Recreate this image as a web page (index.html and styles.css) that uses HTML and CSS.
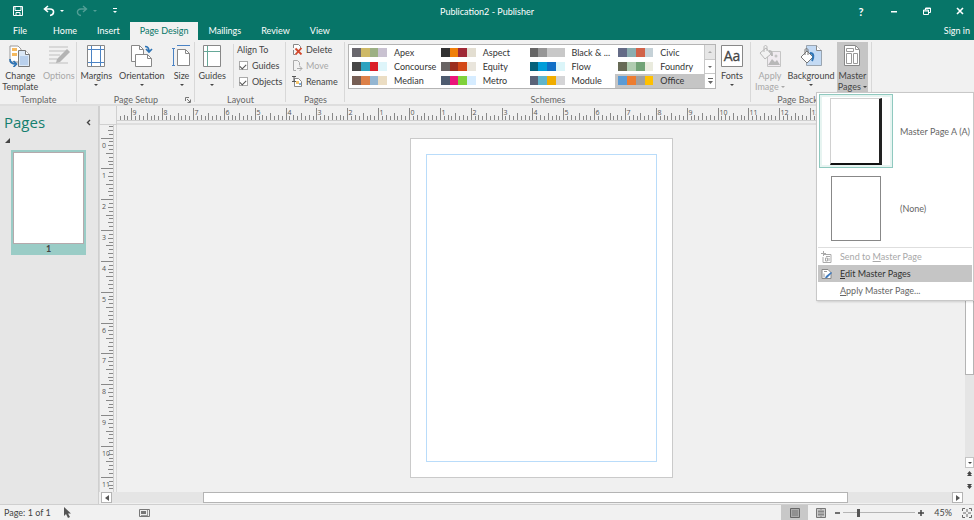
FILE: index.html
```html
<!DOCTYPE html>
<html lang="en">
<head>
    <meta charset="UTF-8">
    <meta name="viewport" content="width=device-width, initial-scale=1.0">
    <title>Publication2 - Publisher</title>
    <link rel="stylesheet" href="styles.css">
</head>
<body>
    <header class="top">
        <div class="titlebar">
            <div class="quick">
                <button aria-label="Save"><svg width="12" height="12" viewBox="0 0 12 12"><path d="M1.500 1.500h9v9h-9zM3 1.500v4h6v-4M4 10.500v-3h4v3" fill="none" stroke="#fff"/></svg></button>
                <button class="undo" aria-label="Undo"><svg width="12" height="12" viewBox="0 0 12 12"><path d="M5 1L1.500 4 5 7M2 4h5c5 0 4.500 6 0 6.500" fill="none" stroke="#fff" stroke-width="1.600"/></svg><i class="caret"></i></button>
                <button class="redo" aria-label="Redo" disabled><svg width="12" height="12" viewBox="0 0 12 12"><path d="M7 1l3.500 3L7 7M10 4H5C0 4 .5 10 5 10.500" fill="none" stroke="#fff" stroke-width="1.400"/></svg><i class="caret"></i></button>
                <button aria-label="Customize toolbar"><svg width="6" height="6" viewBox="0 0 6 6"><path d="M1 0h4v1H1zM1 3h4L3 5z" fill="#fff"/></svg></button>
            </div>
            <h1>Publication2 - Publisher</h1>
            <div class="window-buttons">
                <button aria-label="Help">?</button>
                <button aria-label="Minimize"><svg width="8" height="8" viewBox="0 0 8 8"><path d="M1 4h6v1.500H1z" fill="#fff"/></svg></button>
                <button aria-label="Restore"><svg width="8" height="8" viewBox="0 0 8 8"><path d="M.5 3h5v4.500h-5zM.5 4h5M2.500 3V1h5v4.500h-2M2.500 1.500h5" fill="none" stroke="#fff"/></svg></button>
                <button aria-label="Close"><svg width="8" height="8" viewBox="0 0 8 8"><path d="M1 1l6 6M7 1L1 7" stroke="#fff" stroke-width="1.600"/></svg></button>
            </div>
        </div>
        <nav class="tabs">
            <a href="#file" class="file">File</a>
            <a href="#home">Home</a>
            <a href="#insert">Insert</a>
            <a href="#design" class="active">Page Design</a>
            <a href="#mailings">Mailings</a>
            <a href="#review">Review</a>
            <a href="#view">View</a>
            <a href="#signin" class="signin">Sign in</a>
        </nav>
    </header>

    <section class="ribbon">
        <div class="group template">
            <div class="tools">
                <button class="big">
                    <svg width="22" height="22" viewBox="0 0 22 22"><path d="M1 1h8l3 3v13H1z" fill="#fff" stroke="#999"/><path d="M3 3h5v3H3zM3 8h5v3H3z" fill="#f5b95f"/><path d="M9.500 5.500h7l4 4v12h-11z" fill="#dbe8f6" stroke="#777"/><path d="M16.500 5.500v4h4" fill="#fff" stroke="#777"/><path d="M11 11h8v9h-8z" fill="#b9d0ec"/><path d="M1 14c0 4 2 5 6 5M4.500 16L7.500 19l-3 3" fill="none" stroke="#2e74b5" stroke-width="1.700"/></svg>
                    <span>Change<br>Template</span>
                </button>
                <button class="big" disabled>
                    <svg width="22" height="22" viewBox="0 0 22 22"><path d="M1 2h19M1 6h17M1 10h11M1 14h8M1 18h19" stroke="#d2d2d2" stroke-width="2"/><path d="M8 18l1-4L19 4l3 3-10 10z" fill="#a5a5a5"/></svg>
                    <span>Options</span>
                </button>
            </div>
            <h2>Template</h2>
        </div>
        <div class="group setup">
            <div class="tools">
                <button class="big">
                    <svg width="18" height="22" viewBox="0 0 18 22"><path d="M.5.500h17v21H.5z" fill="#fff" stroke="#888"/><path d="M4.500 1v20M13.500 1v20M1 4.500h16M1 17.500h16" stroke="#4b83c4"/></svg>
                    <span>Margins</span><i class="caret"></i>
                </button>
                <button class="big">
                    <svg width="23" height="22" viewBox="0 0 23 22"><path d="M1.500.500h8l4 4v12h-12z" fill="#fff" stroke="#888"/><path d="M9.500.500v4h4" fill="none" stroke="#888"/><path d="M5.500 9.500h12l4 4v8h-16z" fill="#fff" stroke="#888"/><path d="M17.500 9.500v4h4" fill="none" stroke="#888"/><path d="M15 1.500c3 0 4 2 4 5M16 4l3 3 3-3" fill="none" stroke="#2e74b5" stroke-width="1.700"/></svg>
                    <span>Orientation</span><i class="caret"></i>
                </button>
                <button class="big">
                    <svg width="20" height="22" viewBox="0 0 20 22"><path d="M5 .5h13M1.500 4v16M0 3.500h3M0 20.500h3" stroke="#4b83c4" fill="none"/><path d="M5.500 4.500h8l4 4v12h-12z" fill="#fff" stroke="#888"/><path d="M13.500 4.500v4h4" fill="none" stroke="#888"/></svg>
                    <span>Size</span><i class="caret"></i>
                </button>
            </div>
            <h2>Page Setup</h2>
            <button class="launcher" aria-label="Page Setup options"><svg width="6" height="6" viewBox="0 0 6 6"><path d="M.5 4V.5H4M2 2l3 3M5.500 2.500v3h-3" fill="none" stroke="#777"/></svg></button>
        </div>
        <div class="group layout">
            <div class="tools">
                <button class="big">
                    <svg width="18" height="22" viewBox="0 0 18 22"><path d="M.5.500h17v21H.5z" fill="#fff" stroke="#888"/><path d="M4.500 1v20M1 6.500h16" stroke="#66a898"/></svg>
                    <span>Guides</span><i class="caret"></i>
                </button>
                <div class="align">
                    <span>Align To</span>
                    <label><input type="checkbox" checked>Guides</label>
                    <label><input type="checkbox" checked>Objects</label>
                </div>
            </div>
            <h2>Layout</h2>
        </div>
        <div class="group pages">
            <div class="tools column">
                <button><svg width="11" height="11" viewBox="0 0 11 11"><path d="M1.500 4V.5h5l2 2v2M1.500 6v4.500h2" fill="#fff" stroke="#888"/><path d="M3.500 4.500l6 6M9.500 4l-6 6.500" stroke="#d2472b" stroke-width="1.800"/></svg>Delete</button>
                <button disabled><svg width="11" height="11" viewBox="0 0 11 11"><path d="M4 10.500H1.500V.5h4l2 2v3M5 8.500h5M7.500 6L10 8.500 7.500 11" fill="none" stroke="#aaa"/></svg>Move</button>
                <button><svg width="11" height="11" viewBox="0 0 11 11"><path d="M2.500 2.500h4l3 3v5h-7z" fill="#fff" stroke="#888"/><path d="M0 .5h4M2 .5v5M0 5.500h4" stroke="#555"/><path d="M4 5h3v3H4z" fill="#f5c76f"/><path d="M7 7h2v2H7z" fill="#7caee0"/></svg>Rename</button>
            </div>
            <h2>Pages</h2>
        </div>
        <div class="group schemes">
            <div class="tools">
                <div class="gallery">
                    <div class="scheme-list" id="schemes"></div>
                    <div class="gallery-scroll">
                        <button aria-label="Scroll up" disabled><i class="caret up"></i></button>
                        <button aria-label="Scroll down"><i class="caret"></i></button>
                        <button aria-label="More"><svg width="5" height="6" viewBox="0 0 5 6"><path d="M0 0h5v1H0zM0 3h5L2.500 6z" fill="#666"/></svg></button>
                    </div>
                </div>
                <button class="big">
                    <svg width="22" height="22" viewBox="0 0 22 22"><path d="M.5.500h21v21H.5z" fill="#fff" stroke="#888"/><text x="11" y="16" text-anchor="middle" class="aa">Aa</text></svg>
                    <span>Fonts</span><i class="caret"></i>
                </button>
            </div>
            <h2>Schemes</h2>
        </div>
        <div class="group background">
            <div class="tools">
                <button class="big" disabled>
                    <svg width="22" height="22" viewBox="0 0 22 22"><path d="M8.500 6.500h13v15h-13z" fill="#f0eaf0" stroke="#bbb"/><path d="M9 20l4-6 3 3 2-2 3 5z" fill="#aaa"/><circle cx="17" cy="11" r="1.500" fill="#bbb"/><path d="M1 8l6-5 5 6-6 5z" fill="#f3f3f3" stroke="#aaa"/><path d="M5 7V2c0-2 3-2 3 0v4" fill="none" stroke="#aaa"/><path d="M10 6c3 0 3 2 3 5" fill="none" stroke="#aaa" stroke-width="2"/></svg>
                    <span>Apply<br>Image <i class="caret"></i></span>
                </button>
                <button class="big">
                    <svg width="22" height="22" viewBox="0 0 22 22"><path d="M6.500.500h10l5 5v15h-15z" fill="#c3daf4" stroke="#9aa5b0"/><path d="M16.500.500v5h5" fill="#fff" stroke="#888"/><path d="M1 12l6-6 6 6-6 6z" fill="#fff" stroke="#777"/><path d="M5 10V5c0-2 3-2 3 0v5" fill="none" stroke="#777"/><path d="M10 8c4 0 4 4 2 8" fill="none" stroke="#2e74b5" stroke-width="2"/></svg>
                    <span>Background</span><i class="caret"></i>
                </button>
                <button class="big pressed">
                    <svg width="16" height="22" viewBox="0 0 16 22"><path d="M.5.500h11l4 4v16H.5z" fill="#fff" stroke="#888"/><path d="M11.500.500v4h4M2.500 3.500h7v3h-7zM2.500 8.500h5v10h-5zM9.500 8.500h4v10h-4z" fill="none" stroke="#999"/></svg>
                    <span>Master<br>Pages <i class="caret"></i></span>
                </button>
            </div>
            <h2>Page Background</h2>
        </div>
    </section>

    <main class="body">
        <aside class="page-pane">
            <div class="pane-head">
                <h2>Pages</h2>
                <button aria-label="Collapse pane"><svg width="5" height="7" viewBox="0 0 5 7"><path d="M4 1L1.500 3.500 4 6" fill="none" stroke="#444" stroke-width="1.400"/></svg></button>
            </div>
            <svg class="corner-mark" width="5" height="5" viewBox="0 0 5 5"><path d="M5 0v5H0z" fill="#444"/></svg>
            <button class="thumb"><span class="sheet"></span><b>1</b></button>
        </aside>
        <div class="workspace">
            <div class="ruler-corner"></div>
            <svg class="ruler-h" id="rulerH"></svg>
            <svg class="ruler-v" id="rulerV"></svg>
            <div class="canvas">
                <div class="paper"><div class="margin-guide"></div></div>
            </div>
            <div class="vscroll">
                <div class="vthumb"></div>
                <div class="track"></div>
                <button class="boxed" aria-label="Scroll down"><i class="caret"></i></button>
                <button aria-label="Previous page"><svg width="5" height="6" viewBox="0 0 5 6"><path d="M2.500 0L5 3H0zM2.500 2L5 5H0z" fill="#444"/></svg></button>
                <button aria-label="Next page"><svg width="5" height="6" viewBox="0 0 5 6"><path d="M0 1h5L2.500 4zM0 3h5L2.500 6z" fill="#444"/></svg></button>
            </div>
            <div class="hscroll">
                <button aria-label="Scroll left"><svg width="4" height="6" viewBox="0 0 4 6"><path d="M4 0v6L0 3z" fill="#555"/></svg></button>
                <div class="htrack"><div class="hthumb"></div></div>
                <button aria-label="Scroll right"><svg width="4" height="6" viewBox="0 0 4 6"><path d="M0 0v6l4-3z" fill="#555"/></svg></button>
            </div>
        </div>
    </main>

    <div class="menu">
        <button class="master selected"><span class="master-thumb"><i class="mini shadow"></i></span><span>Master Page A (A)</span></button>
        <button class="master"><span class="master-thumb"><i class="mini"></i></span><span>(None)</span></button>
        <div class="menu-items">
            <button disabled><svg width="11" height="12" viewBox="0 0 11 12"><path d="M3 3.500h7v8H2V6M0 2.500h5M2.500 0v5M5 5.500h4M4.500 7h2v3h-2zM8 7v3" fill="none" stroke="#aaa"/></svg><span>Send to <u>M</u>aster Page</span></button>
            <button class="hover"><svg width="11" height="12" viewBox="0 0 11 12"><path d="M1 1.500h6l3 3v6H1z" fill="#fff" stroke="#888"/><path d="M3 3.500h3M3 5.500v4" stroke="#999"/><path d="M4 10l1-2 5-4 1 1-5 5z" fill="#3d79bd"/></svg><span><u>E</u>dit Master Pages</span></button>
            <button><span><u>A</u>pply Master Page...</span></button>
        </div>
    </div>

    <footer class="status">
        <span class="page-count">Page: 1 of 1</span>
        <svg width="8" height="12" viewBox="0 0 8 12"><path d="M1 0v9l2-2 2 4 2-1-2-3.500h3z" fill="#555"/></svg>
        <svg class="sheet-icon" width="11" height="8" viewBox="0 0 11 8"><path d="M.5.500h10v7H.5z" fill="#eee" stroke="#777"/><path d="M2 2h5v3H2z" fill="#777"/><path d="M2 6.500h6M8.500 1v6" stroke="#999"/></svg>
        <div class="status-right">
            <button class="view on" aria-label="Single page"><svg width="10" height="10" viewBox="0 0 10 10"><path d="M.5.500h9v9h-9z" fill="#aaa" stroke="#666"/><path d="M2 3h6M2 5h6M2 7h6" stroke="#777"/></svg></button>
            <button class="view" aria-label="Two page spread"><svg width="10" height="10" viewBox="0 0 10 10"><path d="M.5.500h9v9h-9z" fill="#ccc" stroke="#777"/><path d="M3 2v6M5 1v8M7 2v6M2 3.500h6M2 6.500h6" stroke="#888"/></svg></button>
            <button aria-label="Zoom out"><svg width="6" height="6" viewBox="0 0 6 6"><path d="M1 3h5" stroke="#444" stroke-width="1.500"/></svg></button>
            <input type="range" min="0" max="100" value="20" aria-label="Zoom">
            <button aria-label="Zoom in"><svg width="6" height="6" viewBox="0 0 6 6"><path d="M0 3h6M3 0v6" stroke="#444" stroke-width="1.500"/></svg></button>
            <span class="percent">45%</span>
            <button aria-label="Fit page"><svg width="10" height="10" viewBox="0 0 10 10"><path d="M.5 3V.5H3M7 .5h2.500V3M9.500 7v2.500H7M3 9.500H.5V7M5 1v3M5 6v3M1 5h3M6 5h3" fill="none" stroke="#666"/></svg></button>
        </div>
    </footer>

    <script src="script.js"></script>
</body>
</html>
```
FILE: styles.css
```css
* {
    box-sizing: border-box;
}
body {
    margin: 0;
    min-height: 100vh;
    display: flex;
    flex-direction: column;
    position: relative;
    font-family: Lato, "Open Sans", sans-serif;
    font-size: 9px;
    line-height: 11px;
    color: #444;
    background: #f0f0f0;
}
button {
    font: inherit;
    color: inherit;
    background: none;
    border: 0;
    padding: 0;
    display: flex;
    align-items: center;
    justify-content: center;
}
button:disabled {
    color: #a8a8a8;
}
h1, h2 {
    margin: 0;
    font-size: 9px;
    font-weight: normal;
}
svg {
    display: block;
    flex-shrink: 0;
}
.caret {
    display: inline-block;
    border: 2px solid transparent;
    border-top-color: currentColor;
    border-bottom: 0;
}
.caret.up {
    border-top: 0;
    border-bottom: 2px solid currentColor;
}

/* title bar and tabs */
.top {
    background: #077568;
    color: #fff;
}
.titlebar {
    height: 22px;
    display: grid;
    grid-template-columns: 1fr auto 1fr;
    align-items: center;
}
.quick {
    display: flex;
    gap: 12px;
    padding-left: 12px;
    height: 20px;
}
.quick .undo {
    margin-left: 7px;
}
.quick .undo, .quick .redo {
    gap: 5px;
}
.quick .redo {
    color: #fff;
    opacity: 0.3;
    margin-right: 3px;
}
.window-buttons {
    display: flex;
    justify-content: flex-end;
    gap: 17px;
    padding-right: 6px;
}
.window-buttons button {
    width: 16px;
    font-size: 11px;
    font-weight: bold;
}
.tabs {
    display: flex;
    height: 18px;
    line-height: 18px;
}
.tabs a {
    color: #fff;
    text-decoration: none;
    padding: 0 10px;
}
.tabs .file {
    padding: 0 16px 0 13px;
}
.tabs .active {
    background: #f1f1f1;
    color: #077568;
}
.tabs .signin {
    margin-left: auto;
    padding: 0 4px;
}

/* ribbon */
.ribbon {
    display: flex;
    height: 66px;
    background: #f1f1f1;
    border-bottom: 2px solid #dedede;
}
.group {
    display: flex;
    flex-direction: column;
    position: relative;
    padding: 4px 0 0;
}
.group::after {
    content: "";
    position: absolute;
    right: 0;
    top: 2px;
    bottom: 2px;
    border-right: 1px solid #d8d8d8;
}
.group h2 {
    text-align: center;
    color: #666;
    line-height: 9px;
}
.tools {
    flex: 1;
    display: flex;
    justify-content: space-around;
    align-items: flex-start;
}
.big {
    flex-direction: column;
    justify-content: flex-start;
    gap: 3px;
    height: 46px;
    white-space: nowrap;
}
.big:disabled svg {
    opacity: 0.8;
}
.big > svg {
    margin-top: 1px;
}
.big span .caret {
    vertical-align: 2px;
}
.template {
    width: 77px;
}
.setup {
    width: 118px;
}
.launcher {
    position: absolute;
    right: 4px;
    bottom: 1px;
}
.layout {
    width: 91px;
}
.align {
    border-left: 1px solid #d8d8d8;
    padding-left: 3px;
    height: 44px;
    display: flex;
    flex-direction: column;
    gap: 5px;
}
.align label {
    display: flex;
    align-items: center;
    gap: 4px;
    padding-left: 2px;
}
.align input {
    appearance: none;
    width: 9px;
    height: 9px;
    margin: 0;
    background: #fff;
    border: 1px solid #aaa;
    display: grid;
    place-items: center;
}
.align input:checked::after {
    content: "";
    width: 5px;
    height: 3px;
    border: solid #555;
    border-width: 0 0 1px 1px;
    transform: rotate(-45deg);
}
.pages {
    width: 59px;
}
.tools.column {
    flex-direction: column;
    justify-content: flex-start;
    gap: 5px;
    padding-left: 6px;
}
.column button {
    gap: 3px;
    height: 11px;
}
.schemes {
    flex: 0 1 406px;
}
.schemes .tools {
    padding: 0 8px 0 3px;
    justify-content: space-between;
}
.gallery {
    display: flex;
    width: 368px;
    height: 45px;
    border: 1px solid #b4b4b4;
    background: #fff;
}
.scheme-list {
    flex: 1;
    display: grid;
    grid-template-columns: repeat(4, 1fr);
    grid-template-rows: repeat(3, 1fr);
}
.scheme {
    justify-content: flex-start;
    gap: 7px;
    padding-left: 3px;
    color: #333;
    line-height: 9px;
}
.scheme.current {
    background: #c5c5c5;
}
.swatches {
    display: flex;
    width: 35px;
    height: 9px;
}
.swatches i {
    flex: 1;
}
.gallery-scroll {
    width: 11px;
    display: flex;
    flex-direction: column;
    border-left: 1px solid #c8c8c8;
}
.gallery-scroll button {
    flex: 1;
    color: #666;
}
.gallery-scroll button:first-child {
    background: #e6e6e6;
    color: #aaa;
}
.gallery-scroll button + button {
    border-top: 1px solid #c8c8c8;
}
.aa {
    font-family: "Open Sans", sans-serif;
    font-size: 14px;
    fill: #444;
    stroke: #444;
    stroke-width: 0.3;
}
.background {
    width: 121px;
}
.background .tools {
    justify-content: space-between;
    padding: 0 4px 0 4px;
}
.pressed {
    background: #c5c5c5;
    width: 31px;
    margin-top: -2px;
    padding-top: 2px;
    height: 50px;
}

/* page pane */
.body {
    flex: 1;
    display: flex;
}
.page-pane {
    width: 99px;
    background: #e6e6e6;
    border-right: 1px solid #cfcfcf;
}
.pane-head {
    display: flex;
    justify-content: space-between;
    align-items: center;
    padding: 6px 7px 5px 4px;
}
.pane-head h2 {
    font-family: "Open Sans", sans-serif;
    font-size: 15px;
    line-height: 20px;
    color: #15806f;
}
.corner-mark {
    margin: 1px 0 7px 5px;
}
.thumb {
    width: 75px;
    height: 105px;
    margin-left: 11px;
    padding: 2px;
    background: #9accc6;
    flex-direction: column;
    border: 0;
}
.thumb .sheet {
    flex: 1;
    width: 100%;
    background: #fff;
    border: 1px solid #b5a9ac;
}
.thumb b {
    line-height: 9px;
}

/* rulers and canvas */
.workspace {
    flex: 1;
    min-width: 0;
    display: grid;
    grid-template-columns: 18px 1fr 9px;
    grid-template-rows: 19px 1fr 12px;
}
.ruler-corner {
    border: solid #d0d0d0;
    border-width: 0 1px 1px 1px;
}
.ruler-h {
    width: 100%;
    height: 19px;
    grid-column: 2 / 4;
    border-bottom: 2px solid #dedede;
}
.ruler-v {
    width: 18px;
    height: 100%;
    border: solid #d8d8d8;
    border-width: 0 1px;
}
.tick {
    stroke: #888;
}
.ruler-edge {
    stroke: #cfcfcf;
}
.ruler-num {
    font-family: "Open Sans", sans-serif;
    font-size: 7px;
    fill: #555;
}
.canvas {
    padding-top: 13px;
    display: flex;
    justify-content: center;
    align-items: flex-start;
}
.paper {
    width: 263px;
    height: 340px;
    padding: 15px;
    background: #fff;
    border: 1px solid #cacaca;
}
.margin-guide {
    height: 100%;
    border: 1px solid #b9dcfa;
}
.vscroll {
    display: flex;
    flex-direction: column;
    background: #f0f0f0;
}
.vthumb {
    flex: 3;
    background: #fff;
    border: 1px solid #b4b4b4;
}
.track {
    flex: 1;
    background: #e5e5e5;
}
.vscroll button {
    height: 12px;
}
.vscroll .boxed {
    background: #fff;
    border: 1px solid #c4c4c4;
    height: 11px;
}
.hscroll {
    grid-column: 1 / 3;
    display: flex;
    padding: 0 2px;
    height: 11px;
}
.hscroll button {
    width: 11px;
    background: #fff;
    border: 1px solid #b4b4b4;
}
.htrack {
    flex: 1;
    display: flex;
    justify-content: center;
    background: #e5e5e5;
    padding-right: 13px;
}
.hthumb {
    width: 78%;
    background: #fff;
    border: 1px solid #b4b4b4;
}

/* master pages menu */
.menu {
    position: absolute;
    top: 92px;
    right: 0;
    width: 158px;
    padding: 1px 2px;
    background: #fff;
    border: 1px solid #c8c8c8;
    color: #666;
    box-shadow: 1px 1px 2px rgba(0, 0, 0, 0.15);
}
.master {
    width: 100%;
    justify-content: flex-start;
    gap: 7px;
}
.master + .master {
    margin-top: 3px;
}
.master-thumb {
    width: 74px;
    height: 74px;
    border: 1px solid transparent;
    display: flex;
    align-items: center;
    justify-content: center;
}
.master.selected .master-thumb {
    border-color: #8fc9bf;
    box-shadow: inset 0 0 0 2px #e7f4f1;
}
.mini {
    width: 50px;
    height: 65px;
    border: 1px solid #888;
}
.mini.shadow {
    width: 52px;
    height: 67px;
    border-width: 1px 3px 2px 1px;
    border-color: #d0d0d0 #222 #111 #d0d0d0;
}
.menu-items {
    margin: 2px -1px 0;
    border-top: 1px solid #dedede;
}
.menu-items button {
    width: 100%;
    height: 17px;
    padding-left: 3px;
    justify-content: flex-start;
}
.menu-items span {
    padding-left: 8px;
}
.menu-items button:last-child {
    padding-left: 14px;
}
.menu-items .hover {
    background: #c5c5c5;
    color: #333;
}

/* status bar */
.status {
    height: 16px;
    display: flex;
    align-items: center;
    padding-left: 4px;
    border-top: 1px solid #cfcfcf;
    background: #f1f1f1;
}
.page-count {
    width: 59px;
}
.sheet-icon {
    margin-left: 68px;
}
.status-right {
    margin-left: auto;
    height: 100%;
    display: flex;
    align-items: center;
    gap: 3px;
    padding-right: 2px;
}
.view {
    width: 27px;
    height: 100%;
}
.view.on {
    background: #c8c8c8;
}
.view + .view {
    width: 20px;
}
.status input {
    appearance: none;
    width: 72px;
    height: 1px;
    margin: 0;
    background: #b5b5b5;
}
.status input::-webkit-slider-thumb {
    appearance: none;
    width: 3px;
    height: 8px;
    background: #555;
}
.percent {
    padding: 0 7px;
}
```
FILE: script.js
```js
const schemes = [
    ['Apex', '#69676d', '#ceb966', '#9cb084', '#c9c2d1'],
    ['Aspect', '#323232', '#f07f09', '#9f2936', '#e3ded1'],
    ['Black & ...', '#666666', '#969696', '#c8c8c8', '#c8c8c8'],
    ['Civic', '#646b86', '#8caeb0', '#d16349', '#c5d1d7'],
    ['Concourse', '#464646', '#2da2bf', '#da1f28', '#def5fa'],
    ['Equity', '#696464', '#9b2d1f', '#d34817', '#e9e5dc'],
    ['Flow', '#04617b', '#009dd9', '#0f6fc6', '#dbf5f9'],
    ['Foundry', '#676a55', '#b0ccb0', '#72a376', '#eaebde'],
    ['Median', '#775f55', '#dd8047', '#94b6d2', '#ebddc3'],
    ['Metro', '#4e5b6f', '#ea157a', '#7fd13b', '#d6ecff'],
    ['Module', '#5a6378', '#60b5cc', '#f0ad00', '#d4d4d6'],
    ['Office', '#5b9bd5', '#ed7d31', '#a0a0a0', '#ffc000']
];

const list = document.getElementById('schemes');
schemes.forEach(([name, ...colors]) => {
    const button = document.createElement('button');
    button.className = name === 'Office' ? 'scheme current' : 'scheme';
    const swatches = colors.map(c => `<i style="background: ${c}"></i>`).join('');
    button.innerHTML = `<span class="swatches">${swatches}</span><span>${name.replace('&', '&amp;')}</span>`;
    list.appendChild(button);
});

// Rulers: one inch on the page is 30.85px at this zoom
const INCH = 30.85;

function drawRuler(svg, zero, vertical) {
    const length = vertical ? svg.clientHeight : svg.clientWidth;
    let out = '';
    const first = Math.ceil(-zero / INCH * 8);
    const last = Math.floor((length - zero) / INCH * 8);
    for (let i = first; i <= last; i++) {
        const p = Math.floor(zero + i * INCH / 8) + 0.5;
        const size = i % 8 === 0 ? 12 : i % 4 === 0 ? 7 : i % 2 === 0 ? 5 : 4;
        out += vertical
            ? `<line class="tick" x1="${13 - size}" x2="13" y1="${p}" y2="${p}"/>`
            : `<line class="tick" x1="${p}" x2="${p}" y1="${14 - size}" y2="14"/>`;
        if (i % 8 === 0) {
            const n = Math.abs(i / 8);
            out += vertical
                ? `<text class="ruler-num" x="2" y="${p + 9}">${n}</text>`
                : `<text class="ruler-num" x="${p + 1}" y="9">${n}</text>`;
        }
    }
    out += vertical
        ? `<line class="ruler-edge" x1="13.5" x2="13.5" y1="0" y2="${length}"/>`
        : `<line class="ruler-edge" x1="0" x2="${length}" y1="14.5" y2="14.5"/>`;
    svg.innerHTML = out;
}

function drawRulers() {
    const paper = document.querySelector('.paper').getBoundingClientRect();
    const h = document.getElementById('rulerH');
    const v = document.getElementById('rulerV');
    drawRuler(h, paper.left - h.getBoundingClientRect().left, false);
    drawRuler(v, paper.top - v.getBoundingClientRect().top, true);
}

drawRulers();
window.addEventListener('resize', drawRulers);
```
